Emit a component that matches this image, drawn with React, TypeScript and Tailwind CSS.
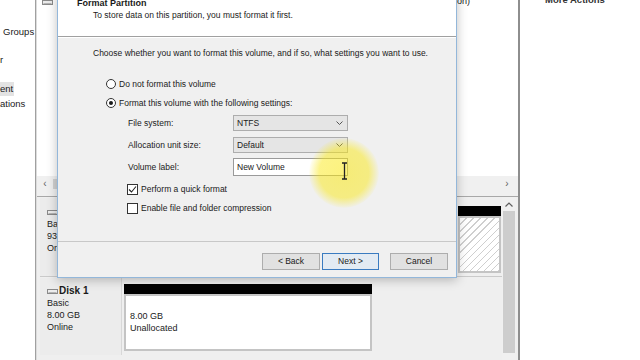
import React from 'react';

const Chevron = () => (
  <svg width="7" height="4" viewBox="0 0 7 4">
    <path d="M0.5 0.5 L3.5 3.5 L6.5 0.5" stroke="#555" fill="none" strokeWidth="1" />
  </svg>
);

const DiskIcon = () => (
  <svg width="11" height="7" viewBox="0 0 11 7">
    <rect x="0.5" y="1.5" width="10" height="4" fill="#ececec" stroke="#8a8a8a" />
    <rect x="1.5" y="4" width="8" height="1" fill="#b4b4b4" />
  </svg>
);

const Radio = ({ checked }: { checked?: boolean }) => (
  <span className="w-[10px] h-[10px] rounded-full border border-[#333] bg-white flex items-center justify-center shrink-0">
    {checked && <span className="w-[4px] h-[4px] rounded-full bg-[#1a1a1a]" />}
  </span>
);

const Check = ({ checked }: { checked?: boolean }) => (
  <span className="w-[11px] h-[11px] border border-[#333] bg-white flex items-center justify-center shrink-0">
    {checked && (
      <svg width="9" height="9" viewBox="0 0 9 9">
        <path d="M1 4.5 L3.5 7 L8 1.5" stroke="#222" fill="none" strokeWidth="1.1" />
      </svg>
    )}
  </span>
);

const Partition = ({ w, hatched, children }: { w: string; hatched?: boolean; children?: React.ReactNode }) => (
  <div className={`${w} flex flex-col shrink-0`}>
    <div className="h-[10px] bg-black" />
    <div
      className={`h-[57px] border-2 border-[#c4c4c4] ${
        hatched
          ? 'bg-[repeating-linear-gradient(135deg,#ffffff_0px,#ffffff_4px,#cfcfcf_4px,#cfcfcf_5px)]'
          : 'bg-white'
      }`}
    >
      {children}
    </div>
  </div>
);

export default function App() {
  return (
    <div className="relative w-[640px] h-[360px] overflow-hidden flex bg-white text-[#1a1a1a] font-['Liberation_Sans',Arial,sans-serif]">
      {/* console tree (left, cut off) */}
      <div className="w-[36px] shrink-0 border-r border-[#a0a0a0] bg-white text-[9.5px] leading-[12px] overflow-hidden">
        <div className="mt-[26px] pl-[3px] whitespace-nowrap">Groups</div>
        <div className="mt-[16px] whitespace-nowrap">r</div>
        <div className="mt-[16px] w-[14px] h-[14px] bg-[#e3e3e3] flex items-center whitespace-nowrap">ent</div>
        <div className="mt-[2px] whitespace-nowrap">ations</div>
      </div>

      {/* middle pane */}
      <div className="w-[482px] shrink-0 flex flex-col border-l border-[#dcdcdc]">
        <div className="h-[176px] bg-white">
          <div className="-mt-[4px] h-[12px] flex items-center justify-between text-[9px] pr-[48px]">
            <span className="ml-[5px]"><DiskIcon /></span>
            <span className="whitespace-nowrap">Simple   Basic   NTFS   Healthy (Primary Partition)</span>
          </div>
        </div>
        {/* horizontal scrollbar */}
        <div className="h-[15px] bg-[#f0f0f0] flex items-center">
          <span className="w-[16px] text-center text-[10px] leading-none text-[#606060]">&lsaquo;</span>
          <span className="w-[390px] h-[10px] bg-[#d2d2d2]" />
          <span className="flex-1" />
          <span className="w-[14px] mr-[4px] text-center text-[10px] leading-none text-[#606060]">&rsaquo;</span>
        </div>
        <div className="h-[6px] bg-[#f0f0f0] border-b border-[#a8a8a8]" />

        {/* graphical disk view */}
        <div className="flex-1 bg-[#efefef] flex">
          <div className="flex-1 pl-[3px] flex flex-col">
            <div className="mt-[1px] h-[79px] flex border-b border-[#cacaca]">
              <div className="w-[82px] shrink-0 bg-[#ececec] border-r border-[#d8d8d8] pl-[7px] pt-[8px] text-[9px] leading-[12px]">
                <div className="h-[12px] flex items-center gap-[1px]">
                  <DiskIcon />
                  <span className="font-bold text-[10px]">Disk 0</span>
                </div>
                <div>Basic</div>
                <div>93.00 GB</div>
                <div>Online</div>
              </div>
              <div className="ml-[2px] pt-[8px] flex gap-[2px]">
                <Partition w="w-[332px]" />
                <Partition w="w-[43px]" hatched />
              </div>
            </div>
            <div className="mt-[1px] h-[77px] flex">
              <div className="w-[82px] shrink-0 bg-[#ececec] border-r border-[#d8d8d8] pl-[7px] pt-[7px] text-[9px] leading-[12px]">
                <div className="h-[12px] flex items-center gap-[1px]">
                  <DiskIcon />
                  <span className="font-bold text-[10px]">Disk 1</span>
                </div>
                <div>Basic</div>
                <div>8.00 GB</div>
                <div>Online</div>
              </div>
              <div className="ml-[2px] pt-[6px] flex">
                <Partition w="w-[248px]">
                  <div className="pl-[4px] pt-[14px] text-[9px] leading-[12px]">
                    <div>8.00 GB</div>
                    <div>Unallocated</div>
                  </div>
                </Partition>
              </div>
            </div>
          </div>
          {/* vertical scrollbar */}
          <div className="w-[14px] mr-[2px] bg-[#f0f0f0] flex flex-col items-center">
            <svg className="mt-[5px]" width="8" height="5" viewBox="0 0 8 5">
              <path d="M0.5 4.5 L4 1 L7.5 4.5" stroke="#606060" fill="none" strokeWidth="1.2" />
            </svg>
            <div className="mt-[4px] w-[12px] h-[142px] bg-[#cdcdcd]" />
          </div>
        </div>
      </div>

      {/* actions pane */}
      <div className="flex-1 border-l-2 border-[#8e8e8e] bg-white">
        <div className="-mt-[7px] ml-[25px] text-[9.5px] font-bold text-[#333] whitespace-nowrap">More Actions</div>
      </div>

      {/* Format Partition wizard */}
      <div className="absolute left-[57px] top-[-8px] w-[400px] h-[286px] border border-[#93b7da] bg-[#f0f0f0] flex flex-col shadow-[0_2px_10px_rgba(0,0,0,0.25)] text-[8.5px] leading-[12px]">
        <div className="h-[44px] shrink-0 bg-white border-b border-[#a0a0a0] pl-[19px] pt-[4px]">
          <div className="font-bold text-[9px]">Format Partition</div>
          <div className="pl-[16px]">To store data on this partition, you must format it first.</div>
        </div>
        <div className="flex-1 border-t border-white pl-[35px] pt-[9px] flex flex-col">
          <div>Choose whether you want to format this volume, and if so, what settings you want to use.</div>
          <div className="mt-[19px] ml-[13px] h-[12px] flex items-center gap-[3px]">
            <Radio />
            <span>Do not format this volume</span>
          </div>
          <div className="mt-[7px] ml-[13px] h-[12px] flex items-center gap-[3px]">
            <Radio checked />
            <span>Format this volume with the following settings:</span>
          </div>
          <div className="mt-[6px] ml-[35px] grid grid-cols-[105px_115px] items-center">
            <span>File system:</span>
            <div className="h-[16px] bg-[#e5e5e5] border border-[#adadad] flex items-center justify-between pl-[3px] pr-[4px]">
              <span>NTFS</span>
              <Chevron />
            </div>
            <span className="mt-[6px]">Allocation unit size:</span>
            <div className="mt-[6px] h-[16px] bg-[#e5e5e5] border border-[#adadad] flex items-center justify-between pl-[3px] pr-[4px]">
              <span>Default</span>
              <Chevron />
            </div>
            <span className="mt-[5px]">Volume label:</span>
            <div className="mt-[5px] h-[18px] bg-white border border-[#9a9a9a] flex items-center pl-[3px]">
              <span>New Volume</span>
            </div>
          </div>
          <div className="mt-[7px] ml-[34px] h-[12px] flex items-center gap-[3px]">
            <Check checked />
            <span>Perform a quick format</span>
          </div>
          <div className="mt-[7px] ml-[34px] h-[12px] flex items-center gap-[3px]">
            <Check />
            <span>Enable file and folder compression</span>
          </div>
        </div>
        <div className="h-[36px] shrink-0 border-t border-[#c8c8c8] pt-[11px] pr-[8px] flex justify-end items-start">
          <button className="w-[58px] h-[17px] bg-[#e1e1e1] border border-[#adadad] leading-none">&lt; Back</button>
          <button className="ml-[2px] w-[57px] h-[17px] bg-[#e3ebf3] border border-[#3a7bc0] leading-none">Next &gt;</button>
          <button className="ml-[11px] w-[58px] h-[17px] bg-[#e1e1e1] border border-[#adadad] leading-none">Cancel</button>
        </div>
      </div>

      {/* cursor highlight */}
      <div className="absolute left-[309px] top-[138px] w-[70px] h-[70px] rounded-full bg-[radial-gradient(circle,rgba(250,232,20,0.55)_0%,rgba(250,232,20,0.5)_50%,rgba(250,232,20,0)_72%)]" />
      <svg className="absolute left-[341px] top-[162px]" width="7" height="18" viewBox="0 0 7 18">
        <path d="M1 1 H6 M3.5 1 V17 M1 17 H6" stroke="#222" strokeWidth="1.3" fill="none" />
      </svg>
    </div>
  );
}
